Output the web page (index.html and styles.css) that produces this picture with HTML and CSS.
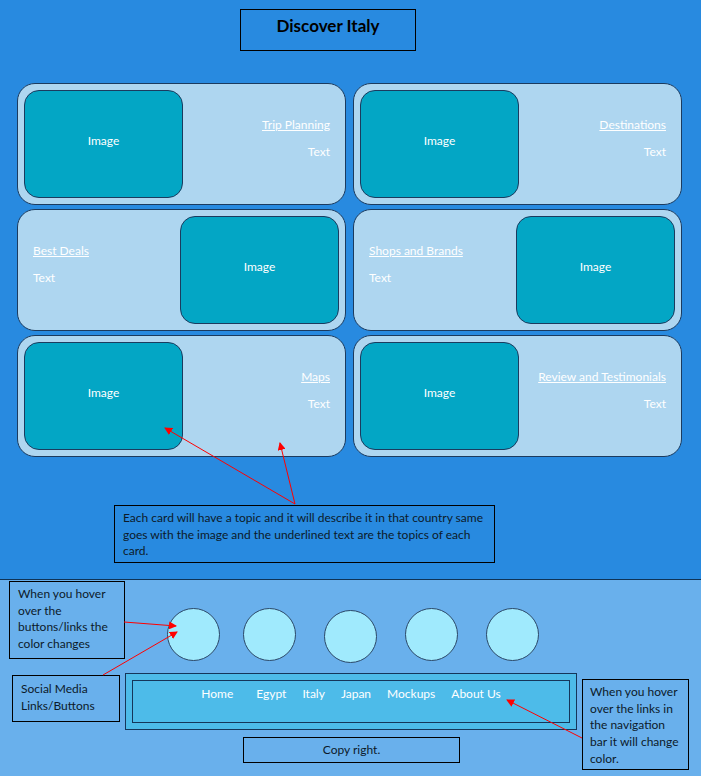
FILE: index.html
```html
<!DOCTYPE html>
<html lang="en">
<head>
  <meta charset="UTF-8" />
  <meta name="viewport" content="width=device-width, initial-scale=1.0" />
  <title>Discover Italy</title>
  <link rel="stylesheet" href="styles.css">
</head>
<body>

  <div class="top">
    <h1 class="title-box">Discover Italy</h1>

    <div class="cards">
      <div class="card">
        <div class="card-image">Image</div>
        <div class="card-body right">
          <a href="#" class="topic">Trip Planning</a>
          <p>Text</p>
        </div>
      </div>
      <div class="card">
        <div class="card-image">Image</div>
        <div class="card-body right">
          <a href="#" class="topic">Destinations</a>
          <p>Text</p>
        </div>
      </div>
      <div class="card">
        <div class="card-body">
          <a href="#" class="topic">Best Deals</a>
          <p>Text</p>
        </div>
        <div class="card-image">Image</div>
      </div>
      <div class="card">
        <div class="card-body">
          <a href="#" class="topic">Shops and Brands</a>
          <p>Text</p>
        </div>
        <div class="card-image">Image</div>
      </div>
      <div class="card">
        <div class="card-image">Image</div>
        <div class="card-body right">
          <a href="#" class="topic">Maps</a>
          <p>Text</p>
        </div>
      </div>
      <div class="card">
        <div class="card-image">Image</div>
        <div class="card-body right">
          <a href="#" class="topic">Review and Testimonials</a>
          <p>Text</p>
        </div>
      </div>
    </div>

    <div class="note note-cards">
      Each card will have a topic and it will describe it in that country same goes with the image and the underlined text are the topics of each card.
    </div>
  </div>

  <footer class="footer">
    <div class="socials">
      <a href="#" class="social"></a>
      <a href="#" class="social"></a>
      <a href="#" class="social"></a>
      <a href="#" class="social"></a>
      <a href="#" class="social"></a>
    </div>

    <nav class="nav-outer">
      <div class="nav-inner">
        <a href="#" class="home">Home</a>
        <a href="#">Egypt</a>
        <a href="#">Italy</a>
        <a href="#">Japan</a>
        <a href="#">Mockups</a>
        <a href="#">About Us</a>
      </div>
    </nav>

    <div class="copyright">Copy right.</div>

    <!-- annotation notes -->
    <div class="note note-hover">When you hover over the buttons/links the color changes</div>
    <div class="note note-social">Social Media Links/Buttons</div>
    <div class="note note-nav">When you hover over the links in the navigation bar it will change color.</div>
  </footer>

  <!-- red annotation arrows -->
  <svg class="arrows" width="701" height="776" viewBox="0 0 701 776">
    <defs>
      <marker id="head" markerWidth="8" markerHeight="8" refX="7" refY="4" orient="auto" markerUnits="userSpaceOnUse">
        <path d="M0,0 L8,4 L0,8 z" fill="#ff0000" />
      </marker>
    </defs>
    <g stroke="#ff0000" stroke-width="1" fill="none" marker-end="url(#head)">
      <line x1="295" y1="504" x2="165" y2="428" />
      <line x1="295" y1="504" x2="280" y2="443" />
      <line x1="124" y1="622" x2="176" y2="626" />
      <line x1="103" y1="675" x2="177" y2="632" />
      <line x1="582" y1="738" x2="507" y2="700" />
    </g>
  </svg>

</body>
</html>
```

FILE: styles.css
```css
body {
  margin: 0;
  width: 701px;
  height: 776px;
  position: relative;
  overflow: hidden;
  font-family: Lato, "Open Sans", sans-serif;
  font-size: 12px;
  color: #0c1a2a;
}
.top {
  background-color: #288ae0;
  height: 580px;
  padding-top: 9px;
  box-sizing: border-box;
  border-bottom: 1px solid #0f3356;
}
.title-box {
  margin: 0 0 0 240px;
  width: 176px;
  height: 42px;
  box-sizing: border-box;
  border: 1px solid #000;
  font-size: 17px;
  font-weight: bold;
  color: #000;
  text-align: center;
  line-height: 32px;
}
.cards {
  display: grid;
  grid-template-columns: 329px 329px;
  grid-auto-rows: 122px;
  column-gap: 7px;
  row-gap: 4px;
  margin: 32px 0 0 17px;
}
.card {
  display: flex;
  align-items: center;
  justify-content: space-between;
  padding: 0 6px;
  background-color: #aed6f0;
  border: 1px solid #1b3b5f;
  border-radius: 18px;
}
.card-image {
  width: 159px;
  height: 108px;
  flex-shrink: 0;
  display: flex;
  align-items: center;
  justify-content: center;
  box-sizing: border-box;
  padding-bottom: 8px;
  background-color: #03a6c5;
  border: 1px solid #1b3b5f;
  border-radius: 15px;
  color: #fff;
}
.card-body {
  flex: 1;
  align-self: stretch;
  padding: 33px 9px 0 9px;
  color: #fff;
  line-height: 16px;
}
.card-body.right {
  text-align: right;
}
.card-body .topic {
  color: #fff;
  text-decoration: underline;
}
.card-body p {
  margin: 11px 0 0;
}
.note {
  box-sizing: border-box;
  border: 1px solid #000;
  line-height: 16.7px;
  color: #0c1a2a;
}
.note-cards {
  margin: 48px 0 0 114px;
  width: 381px;
  height: 58px;
  padding: 4px 8px;
}
.footer {
  position: relative;
  height: 196px;
  background-color: #69b0ec;
  padding-top: 28px;
  box-sizing: border-box;
}
.socials {
  display: flex;
  gap: 28px;
  margin-left: 167px;
}
.social {
  width: 53px;
  height: 53px;
  box-sizing: border-box;
  border-radius: 50%;
  background-color: #a0eafd;
  border: 1px solid #2b4868;
}
.social:first-child {
  margin-right: -5px;
}
.social:nth-child(3) {
  margin-top: 2px;
}
.nav-outer {
  margin: 10px 0 0 125px;
  width: 452px;
  height: 57px;
  box-sizing: border-box;
  padding: 6px;
  background-color: #4dbbe9;
  border: 1px solid #15365a;
}
.nav-inner {
  height: 100%;
  box-sizing: border-box;
  border: 1px solid #15365a;
  display: flex;
  justify-content: center;
  gap: 16px;
  padding-top: 5px;
  line-height: 16px;
}
.nav-inner a {
  color: #fff;
  text-decoration: none;
}
.nav-inner a:hover {
  color: #0c1a2a;
}
.nav-inner .home {
  margin-right: 7px;
}
.copyright {
  margin: 7px 0 0 243px;
  width: 217px;
  height: 26px;
  box-sizing: border-box;
  border: 1px solid #000;
  text-align: center;
  line-height: 23px;
}
.note-hover {
  position: absolute;
  left: 9px;
  top: 1px;
  width: 116px;
  height: 78px;
  padding: 4px 8px;
}
.note-social {
  position: absolute;
  left: 12px;
  top: 95px;
  width: 108px;
  height: 47px;
  padding: 5px 8px;
}
.note-nav {
  position: absolute;
  left: 582px;
  top: 99px;
  width: 107px;
  height: 91px;
  padding: 4px 7px;
}
.arrows {
  position: absolute;
  left: 0;
  top: 0;
  pointer-events: none;
}
```
